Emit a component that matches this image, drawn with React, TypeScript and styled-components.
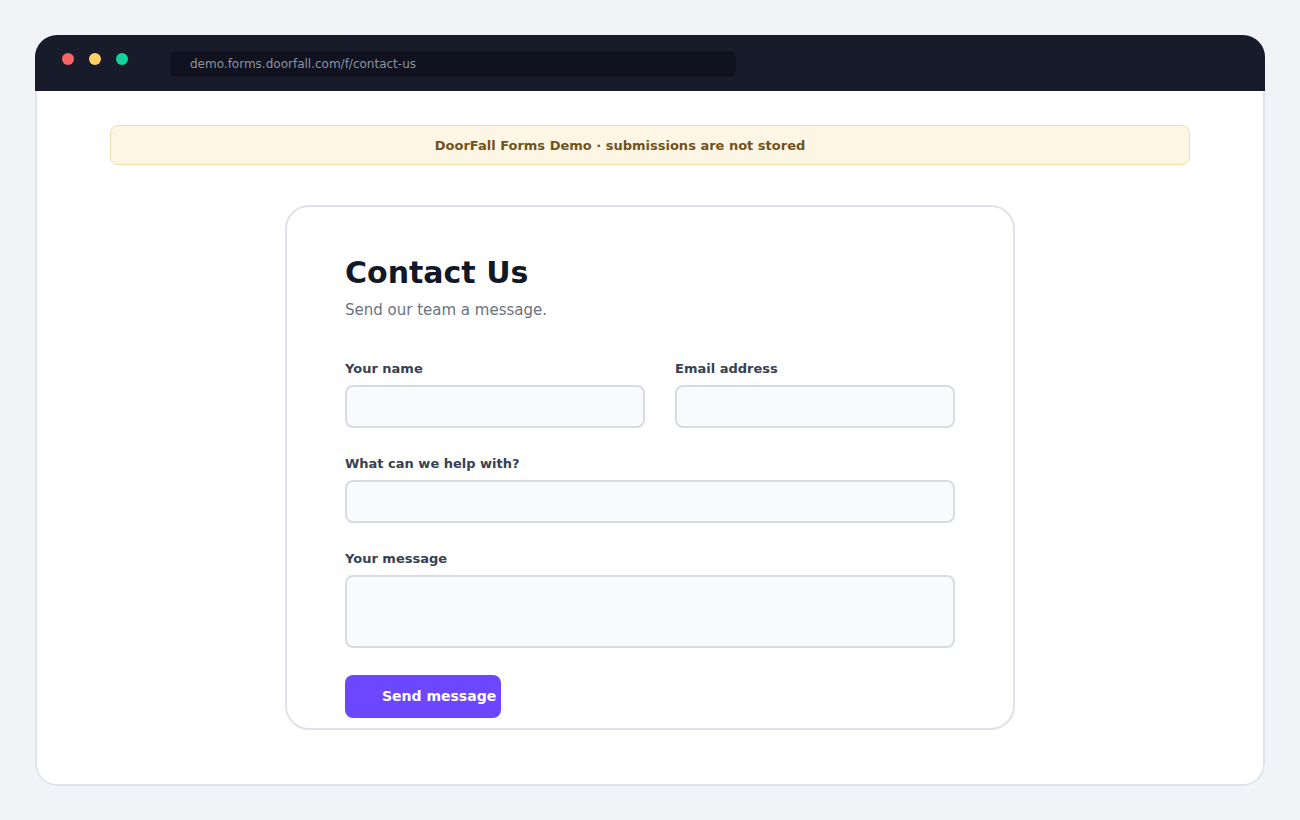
import React from "react";
import styled, { createGlobalStyle } from "styled-components";

const GlobalStyle = createGlobalStyle`
  html, body {
    margin: 0;
    padding: 0;
    background: #f1f3f7;
    font-family: "DejaVu Sans", "Noto Sans", sans-serif;
  }
  * {
    box-sizing: border-box;
  }
`;

const Page = styled.div`
  width: 1300px;
  height: 820px;
  padding: 35px;
`;

const Window = styled.div`
  width: 1230px;
  height: 751px;
  display: flex;
  flex-direction: column;
  border-radius: 22px;
  overflow: hidden;
`;

const TitleBar = styled.div`
  height: 56px;
  flex: none;
  background: #181b2a;
  display: flex;
  align-items: flex-start;
  padding: 16px 0 0 27px;
`;

const Dots = styled.div`
  display: flex;
  gap: 15px;
  margin-top: 1px;
  margin-right: 42px;
  height: 14px;
  align-items: center;
`;

const Dot = styled.span<{ $color: string }>`
  width: 12px;
  height: 12px;
  border-radius: 50%;
  background: ${(p) => p.$color};
`;

const UrlBar = styled.div`
  width: 566px;
  height: 26px;
  border-radius: 6px;
  background: #10131f;
  color: #8b91a1;
  font-size: 12px;
  line-height: 26px;
  padding-left: 20px;
`;

const Body = styled.div`
  flex: 1;
  background: #ffffff;
  border: 2px solid #e0e3ea;
  border-top: none;
  border-radius: 0 0 22px 22px;
  padding: 34px 73px 0;
  display: flex;
  flex-direction: column;
  align-items: center;
`;

const Banner = styled.div`
  width: 1080px;
  height: 40px;
  background: #fef6e4;
  border: 1px solid #efdcaa;
  border-radius: 8px;
  color: #6f5321;
  font-size: 13px;
  font-weight: bold;
  display: flex;
  align-items: center;
  justify-content: center;
  padding-right: 60px;
`;

const Card = styled.form`
  width: 730px;
  margin-top: 40px;
  border: 2px solid #dfe2e8;
  border-radius: 24px;
  padding: 48px 58px 10px;
`;

const Title = styled.h1`
  margin: 0;
  font-size: 30px;
  line-height: 36px;
  font-weight: bold;
  color: #111827;
`;

const Subtitle = styled.p`
  margin: 8px 0 0;
  font-size: 15px;
  line-height: 22px;
  color: #6b7280;
`;

const Fields = styled.div`
  margin-top: 40px;
  display: grid;
  grid-template-columns: 300px 1fr;
  column-gap: 30px;
  row-gap: 28px;
`;

const Field = styled.label<{ $wide?: boolean }>`
  display: flex;
  flex-direction: column;
  gap: 8px;
  grid-column: ${(p) => (p.$wide ? "1 / -1" : "auto")};
`;

const LabelText = styled.span`
  font-size: 13px;
  line-height: 16px;
  font-weight: bold;
  color: #374151;
`;

const Input = styled.input`
  height: 43px;
  width: 100%;
  border: 2px solid #d8dbe2;
  border-radius: 8px;
  background: #f8fafc;
  font: inherit;
  outline: none;
`;

const TextArea = styled.textarea`
  height: 73px;
  width: 100%;
  border: 2px solid #d8dbe2;
  border-radius: 8px;
  background: #f8fafc;
  font: inherit;
  resize: none;
  outline: none;
  display: block;
`;

const SubmitButton = styled.button`
  margin-top: 27px;
  width: 156px;
  height: 43px;
  border: none;
  border-radius: 8px;
  background: #6c47ff;
  color: #ffffff;
  font-family: "DejaVu Sans", sans-serif;
  font-size: 14px;
  font-weight: bold;
  text-align: left;
  padding: 0 0 2px 37px;
  white-space: nowrap;
  display: block;
`;

export default function App() {
  return (
    <Page>
      <GlobalStyle />
      <Window>
        <TitleBar>
          <Dots>
            <Dot $color="#fb6467" />
            <Dot $color="#fdd065" />
            <Dot $color="#10d39e" />
          </Dots>
          <UrlBar>demo.forms.doorfall.com/f/contact-us</UrlBar>
        </TitleBar>
        <Body>
          <Banner>DoorFall Forms Demo · submissions are not stored</Banner>
          <Card onSubmit={(e) => e.preventDefault()}>
            <Title>Contact Us</Title>
            <Subtitle>Send our team a message.</Subtitle>
            <Fields>
              <Field>
                <LabelText>Your name</LabelText>
                <Input type="text" />
              </Field>
              <Field>
                <LabelText>Email address</LabelText>
                <Input type="email" />
              </Field>
              <Field $wide>
                <LabelText>What can we help with?</LabelText>
                <Input type="text" />
              </Field>
              <Field $wide>
                <LabelText>Your message</LabelText>
                <TextArea />
              </Field>
            </Fields>
            <SubmitButton type="submit">Send message</SubmitButton>
          </Card>
        </Body>
      </Window>
    </Page>
  );
}
